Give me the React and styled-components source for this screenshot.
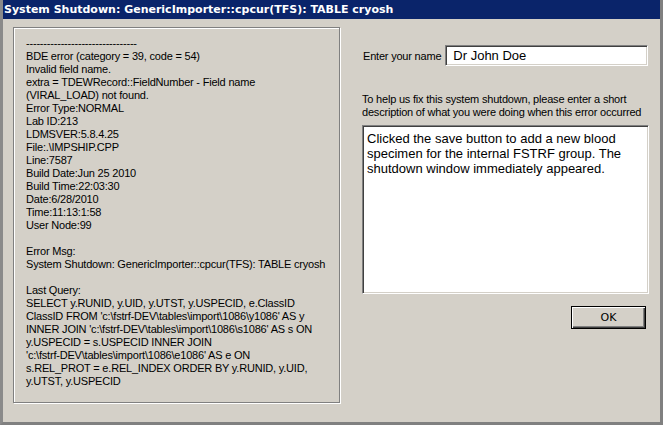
import styled, { createGlobalStyle } from "styled-components";

const GlobalStyle = createGlobalStyle`
  html, body {
    margin: 0;
    padding: 0;
    background: #d4d0c8;
  }
  body {
    font-family: "Liberation Sans", Arial, sans-serif;
  }
`;

const Window = styled.div`
  width: 663px;
  height: 425px;
  box-sizing: border-box;
  background: #d4d0c8;
  border-right: 3px solid #808080;
  border-bottom: 3px solid #808080;
  border-left: 3px solid #8a8a8a;
  display: flex;
  flex-direction: column;
`;

const TitleBar = styled.div`
  height: 19px;
  background: #0a246a;
  color: #ffffff;
  font-family: "DejaVu Sans", Tahoma, sans-serif;
  font-weight: bold;
  font-size: 11px;
  line-height: 19px;
  padding-left: 1px;
  white-space: nowrap;
  overflow: hidden;
`;

const Body = styled.div`
  flex: 1;
  display: flex;
  padding: 8px 11px 19px 10px;
  gap: 19px;
`;

const GroupBox = styled.div`
  width: 327px;
  box-sizing: border-box;
  border: 1px solid #808080;
  box-shadow: inset 1px 1px 0 #ffffff, 1px 1px 0 #ffffff;
  padding: 9px 12px;
`;

const Report = styled.pre`
  margin: 0;
  font-family: "Liberation Sans", Arial, sans-serif;
  font-size: 11px;
  line-height: 13px;
  letter-spacing: -0.2px;
  color: #000;
  white-space: pre-wrap;
`;

const Side = styled.div`
  flex: 1;
  display: flex;
  flex-direction: column;
  padding-top: 18px;
`;

const NameRow = styled.div`
  display: flex;
  align-items: center;
  gap: 4px;
  padding-left: 4px;
`;

const Label = styled.span`
  font-size: 11px;
  letter-spacing: -0.2px;
  white-space: nowrap;
  color: #000;
`;

const Sunken = styled.div`
  background: #ffffff;
  border-top: 1px solid #808080;
  border-left: 1px solid #808080;
  border-right: 1px solid #ffffff;
  border-bottom: 1px solid #ffffff;
  box-shadow: inset 1px 1px 0 #404040, inset -1px -1px 0 #d4d0c8;
  font-size: 13px;
  color: #000;
`;

const NameField = styled(Sunken)`
  width: 203px;
  height: 21px;
  box-sizing: border-box;
  line-height: 19px;
  padding-left: 7px;
`;

const Hint = styled.p`
  margin: 27px 0 6px 3px;
  font-size: 11px;
  line-height: 13px;
  letter-spacing: -0.2px;
  white-space: nowrap;
  color: #000;
`;

const Description = styled(Sunken)`
  margin-left: 3px;
  height: 169px;
  box-sizing: border-box;
  padding: 5px 4px;
  line-height: 15px;
`;

const ButtonRow = styled.div`
  display: flex;
  justify-content: flex-end;
  margin-top: 12px;
  padding-right: 3px;
`;

const Button = styled.button`
  width: 75px;
  height: 23px;
  background: #d4d0c8;
  border: 1px solid #000;
  box-shadow: inset 1px 1px 0 #ffffff, inset -1px -1px 0 #404040,
    inset -2px -2px 0 #808080;
  font-family: "DejaVu Sans", Tahoma, sans-serif;
  font-size: 11px;
  color: #000;
  padding: 0;
`;

const report = `--------------------------------
BDE error (category = 39, code = 54)
Invalid field name.
extra = TDEWRecord::FieldNumber - Field name
(VIRAL_LOAD) not found.
Error Type:NORMAL
Lab ID:213
LDMSVER:5.8.4.25
File:.\\IMPSHIP.CPP
Line:7587
Build Date:Jun 25 2010
Build Time:22:03:30
Date:6/28/2010
Time:11:13:1:58
User Node:99

Error Msg:
System Shutdown: GenericImporter::cpcur(TFS): TABLE cryosh

Last Query:
SELECT y.RUNID, y.UID, y.UTST, y.USPECID, e.ClassID
ClassID FROM 'c:\\fstrf-DEV\\tables\\import\\1086\\y1086' AS y
INNER JOIN 'c:\\fstrf-DEV\\tables\\import\\1086\\s1086' AS s ON
y.USPECID = s.USPECID INNER JOIN
'c:\\fstrf-DEV\\tables\\import\\1086\\e1086' AS e ON
s.REL_PROT = e.REL_INDEX ORDER BY y.RUNID, y.UID,
y.UTST, y.USPECID`;

const App = () => (
  <>
    <GlobalStyle />
    <Window>
      <TitleBar>System Shutdown: GenericImporter::cpcur(TFS): TABLE cryosh</TitleBar>
      <Body>
        <GroupBox>
          <Report>{report}</Report>
        </GroupBox>
        <Side>
          <NameRow>
            <Label>Enter your name</Label>
            <NameField>Dr John Doe</NameField>
          </NameRow>
          <Hint>
            To help us fix this system shutdown, please enter a short
            <br />
            description of what you were doing when this error occurred
          </Hint>
          <Description>
            Clicked the save button to add a new blood specimen for the
            internal FSTRF group. The shutdown window immediately appeared.
          </Description>
          <ButtonRow>
            <Button>OK</Button>
          </ButtonRow>
        </Side>
      </Body>
    </Window>
  </>
);

export default App;
